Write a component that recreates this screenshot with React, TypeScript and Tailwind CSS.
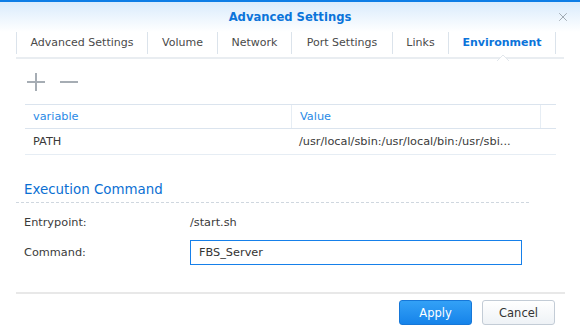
import { X } from "lucide-react";

const tabs = [
  { label: "Advanced Settings", w: "w-[131px]" },
  { label: "Volume", w: "w-[70px]" },
  { label: "Network", w: "w-[74px]" },
  { label: "Port Settings", w: "w-[101px]" },
  { label: "Links", w: "w-[56px]" },
  { label: "Environment", w: "w-[108px]", active: true },
];

const App = () => {
  return (
    <div className="w-[580px] h-[331px] overflow-hidden bg-white text-[11.3px] leading-[16px] text-[#3a3a3a] font-['DejaVu_Sans',Verdana,sans-serif]">
      <div className="h-[2px] bg-[#0d7de6]" />
      <header className="relative flex h-[30px] items-center justify-center bg-gradient-to-b from-[#d9ebfc] to-white">
        <h1 className="text-[11.6px] font-bold text-[#0b74da]">Advanced Settings</h1>
        <X className="absolute right-[10px] top-[8px] text-[#9099a2]" size={14} strokeWidth={1.4} />
      </header>

      <nav className="mx-[16px] flex h-[27px] border-b-2 border-[#e9edf1]">
        {tabs.map((t, i) => (
          <div
            key={t.label}
            className={`relative flex h-[22px] items-center justify-center border-l border-[#dbe3eb] text-[11px] ${t.w} ${
              i === tabs.length - 1 ? "border-r" : ""
            } ${t.active ? "font-bold text-[#0b74da]" : "text-[#4a4a4a]"}`}
          >
            {t.label}
            {t.active && (
              <svg className="absolute -bottom-[7px] left-[48px]" width="12" height="6" viewBox="0 0 12 6">
                <path d="M0 6 L6 0 L12 6" fill="white" stroke="#e2e7ec" strokeWidth="1" />
              </svg>
            )}
          </div>
        ))}
      </nav>

      <div className="ml-[27px] mt-[14px] flex h-[18px] items-center gap-[15px]">
        <svg width="18" height="18" viewBox="0 0 18 18">
          <rect x="0" y="8" width="18" height="2" fill="#a6adb4" />
          <rect x="8" y="0" width="2" height="18" fill="#a6adb4" />
        </svg>
        <svg width="18" height="18" viewBox="0 0 18 18">
          <rect x="0" y="8" width="18" height="2" fill="#a6adb4" />
        </svg>
      </div>

      <div className="ml-[25px] mt-[13px] w-[531px]">
        <div className="flex h-[25px] border-y border-[#dbe4ee] text-[#2a8ae6]">
          <div className="flex w-[266px] items-center pl-[8px]">variable</div>
          <div className="flex w-[249px] items-center border-l border-[#e6edf4] pl-[8px]">Value</div>
          <div className="flex-1 border-l border-[#e6edf4]" />
        </div>
        <div className="flex h-[26px] border-b border-[#e6edf4]">
          <div className="flex w-[266px] items-center pl-[8px]">PATH</div>
          <div className="flex w-[249px] items-center pl-[8px]">/usr/local/sbin:/usr/local/bin:/usr/sbi...</div>
        </div>
      </div>

      <div className="ml-[16px] mt-[25px] w-[513px] border-b border-dashed border-[#cfd7df] pb-[2px] pl-[8px] text-[13.4px] leading-[20px] text-[#0a6fd3]">
        Execution Command
      </div>

      <div className="ml-[24px] mt-[10px] flex h-[20px] items-center">
        <span className="w-[166px]">Entrypoint:</span>
        <span>/start.sh</span>
      </div>
      <div className="ml-[24px] mt-[7px] flex items-center">
        <span className="w-[166px]">Command:</span>
        <div className="flex h-[25px] w-[332px] items-center border border-[#1680ea] pl-[8px] text-[#333]">
          FBS_Server
        </div>
      </div>

      <div className="ml-[16px] mt-[27px] h-[2px] w-[549px] bg-[#e8e8e8]" />

      <div className="mr-[25px] mt-[6px] flex justify-end gap-[10px]">
        <button className="h-[25px] w-[73px] rounded-[3px] border border-[#1677d8] bg-gradient-to-b from-[#33a1f6] to-[#1583ea] text-[11.5px] text-white">
          Apply
        </button>
        <button className="h-[25px] w-[73px] rounded-[3px] border border-[#c3ccd6] bg-gradient-to-b from-white to-[#eef2f6] text-[11.5px] text-[#333]">
          Cancel
        </button>
      </div>
    </div>
  );
};

export default App;
